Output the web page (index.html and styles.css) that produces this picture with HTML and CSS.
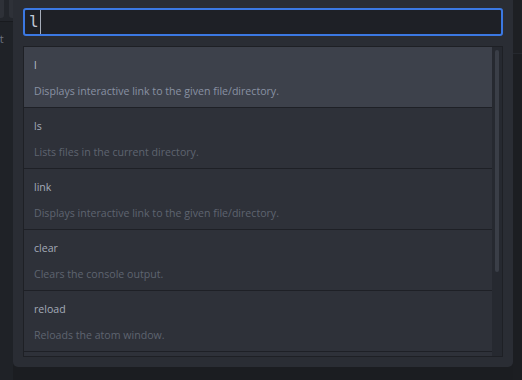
FILE: index.html
```html
<!DOCTYPE html>
<html>
<head>
<meta charset="utf-8">
<link rel="stylesheet" href="styles.css">
</head>
<body>
<div class="app">
  <div class="side">
    <div class="tabs"><span class="tab"></span><span class="tab"></span></div>
    <div class="side-text">xt</div>
  </div>
  <div class="modal">
    <div class="input"><span class="typed">l</span><span class="caret"></span></div>
    <div class="list">
      <div class="items">
        <div class="item selected">
          <div class="name">l</div>
          <div class="desc">Displays interactive link to the given file/directory.</div>
        </div>
        <div class="item">
          <div class="name">ls</div>
          <div class="desc">Lists files in the current directory.</div>
        </div>
        <div class="item">
          <div class="name">link</div>
          <div class="desc">Displays interactive link to the given file/directory.</div>
        </div>
        <div class="item">
          <div class="name">clear</div>
          <div class="desc">Clears the console output.</div>
        </div>
        <div class="item">
          <div class="name">reload</div>
          <div class="desc">Reloads the atom window.</div>
        </div>
        <div class="item empty"></div>
      </div>
      <div class="scroll"><div class="thumb"></div></div>
    </div>
  </div>
  <div class="right">
    <div class="right-top"></div>
  </div>
</div>
</body>
</html>
```
FILE: styles.css
```css
html, body {
  margin: 0;
  padding: 0;
  width: 522px;
  height: 380px;
  overflow: hidden;
  background: #1b1d21;
  font-family: "Open Sans", "Noto Sans", sans-serif;
}
.app {
  display: flex;
  height: 380px;
}
.side {
  width: 13px;
  background: #1f2227;
  display: flex;
  flex-direction: column;
  height: 380px;
  overflow: hidden;
}
.tabs {
  height: 22px;
  display: flex;
  gap: 5px;
  box-sizing: border-box;
  border-bottom: 1px solid #181a1e;
  background: #23262c;
}
.tab {
  width: 4px;
  height: 18px;
  background: #2e3138;
  border-radius: 0 0 3px 0;
}
.tab + .tab {
  border-radius: 0 0 0 3px;
}
.side-text {
  color: #6d7380;
  font-size: 11px;
  margin-left: -6px;
  margin-top: 9px;
}
.modal {
  width: 500px;
  height: 367px;
  background: #2a2d34;
  border-radius: 0 0 5px 5px;
  box-sizing: border-box;
  padding: 8px 10px 0 10px;
  display: flex;
  flex-direction: column;
}
.input {
  height: 28px;
  box-sizing: border-box;
  border: 2px solid #3b78e2;
  border-radius: 3px;
  background: #1e2026;
  display: flex;
  align-items: center;
  padding-left: 4px;
}
.typed {
  font-family: "DejaVu Sans Mono", monospace;
  font-size: 16px;
  color: #c2c8d4;
  line-height: 18px;
}
.caret {
  width: 1px;
  height: 24px;
  background: #a6adba;
  margin-left: 1px;
}
.list {
  margin-top: 10px;
  height: 311px;
  border: 1px solid #1e2025;
  box-sizing: border-box;
  display: flex;
  overflow: hidden;
  background: #262930;
}
.items {
  width: 468px;
  overflow: hidden;
}
.item {
  height: 61px;
  box-sizing: border-box;
  border-bottom: 1px solid #1e2026;
  background: #2e3139;
  padding: 11px 0 0 10px;
}
.item.selected {
  background: #3d414b;
}
.name {
  font-size: 10.6px;
  line-height: 15px;
  color: #a4abb8;
}
.desc {
  font-size: 10.6px;
  line-height: 15px;
  margin-top: 11px;
  color: #5e6470;
}
.selected .name {
  color: #b8c0d0;
}
.selected .desc {
  color: #8991a3;
}
.scroll {
  flex: 1;
  background: #262930;
  padding: 3px 0 0 3px;
}
.thumb {
  width: 4px;
  height: 222px;
  background: #3a3e47;
  border-radius: 2px;
}
.right {
  flex: 1;
  background: #1c1e22;
}
.right-top {
  height: 53px;
  border-bottom: 1px solid #25282e;
  background: #1e2024;
}
```
